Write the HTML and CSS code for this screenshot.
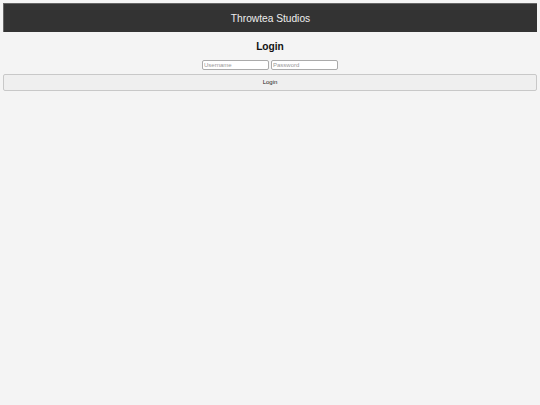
FILE: index.html
```html
<!DOCTYPE html>
<html>
<head>
<meta charset="utf-8">
<link rel="stylesheet" href="styles.css">
</head>
<body>
<header class="topbar">Throwtea Studios</header>
<main class="login">
  <h2 class="login-title">Login</h2>
  <form class="login-form">
    <div class="fields">
      <input class="field" type="text" placeholder="Username">
      <input class="field" type="password" placeholder="Password">
    </div>
    <button class="login-btn" type="button">Login</button>
  </form>
</main>
</body>
</html>
```
FILE: styles.css
```css
html, body {
  background: #f4f4f4;
}
body {
  margin: 3px;
  font-family: "Liberation Sans", Arial, sans-serif;
  color: #111;
}
.topbar {
  height: 29px;
  box-sizing: border-box;
  background: #333;
  border-top: 1px solid #666;
  border-left: 1px solid #666;
  color: #eee;
  font-size: 10.2px;
  display: flex;
  align-items: center;
  justify-content: center;
}
.login-title {
  margin: 9px 0 7px;
  font-size: 10.2px;
  line-height: 12px;
  text-align: center;
  font-weight: bold;
}
.login-form {
  margin: 0;
  display: flex;
  flex-direction: column;
  gap: 4px;
}
.fields {
  display: flex;
  justify-content: center;
  gap: 2px;
}
.field {
  width: 67px;
  height: 10px;
  box-sizing: border-box;
  margin: 0;
  padding: 0 1px;
  border: 1px solid #aaa;
  border-radius: 2px;
  background: #fff;
  font-family: "Liberation Sans", Arial, sans-serif;
  font-size: 6px;
  outline: none;
}
.field::placeholder {
  color: #999;
}
.login-btn {
  height: 17px;
  margin: 0;
  padding: 0 0 1px;
  box-sizing: border-box;
  width: 100%;
  background: #efefef;
  border: 1px solid #c8c8c8;
  border-radius: 2px;
  font-family: "Liberation Sans", Arial, sans-serif;
  font-size: 6px;
  color: #222;
}
```
